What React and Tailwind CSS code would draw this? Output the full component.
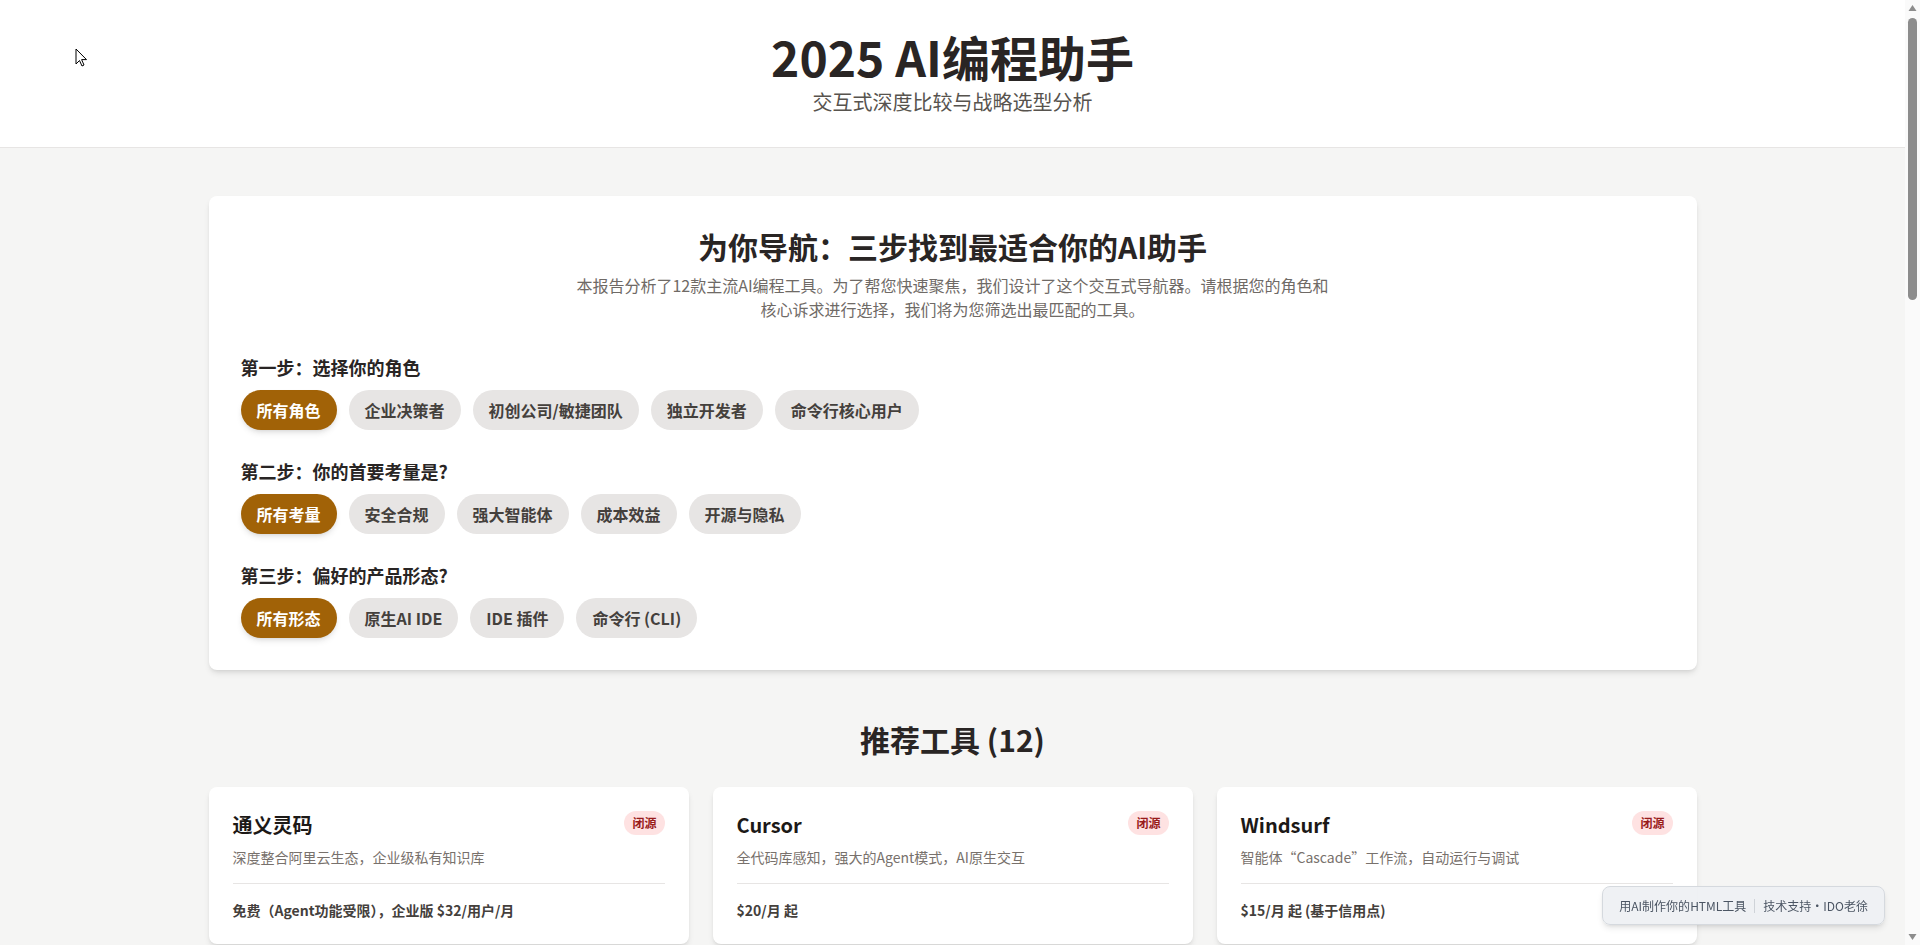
import React, { useState } from "react";

const steps = [
  { label: "第一步：选择你的角色", options: ["所有角色", "企业决策者", "初创公司/敏捷团队", "独立开发者", "命令行核心用户"] },
  { label: "第二步：你的首要考量是?", options: ["所有考量", "安全合规", "强大智能体", "成本效益", "开源与隐私"] },
  { label: "第三步：偏好的产品形态?", options: ["所有形态", "原生AI IDE", "IDE 插件", "命令行 (CLI)"] },
];

const tools = [
  { name: "通义灵码", desc: "深度整合阿里云生态，企业级私有知识库", price: "免费（Agent功能受限），企业版 $32/用户/月", open: false, form: "IDE 插件", agent: "中", security: "高" },
  { name: "Cursor", desc: "全代码库感知，强大的Agent模式，AI原生交互", price: "$20/月 起", open: false, form: "原生AI IDE", agent: "高", security: "中" },
  { name: "Windsurf", desc: "智能体“Cascade”工作流，自动运行与调试", price: "$15/月 起 (基于信用点)", open: false, form: "原生AI IDE", agent: "高", security: "中" },
  { name: "GitHub Copilot", desc: "生态最成熟，深度集成GitHub工作流", price: "$10/月 起，企业版 $39/用户/月", open: false, form: "IDE 插件", agent: "中", security: "高" },
  { name: "Claude Code", desc: "终端原生智能体，超强代码推理与重构能力", price: "包含于 Claude Pro $20/月", open: false, form: "命令行 (CLI)", agent: "高", security: "中" },
  { name: "Gemini CLI", desc: "谷歌开源命令行智能体，超大上下文窗口", price: "免费（个人账户额度）", open: true, form: "命令行 (CLI)", agent: "高", security: "中" },
  { name: "Cline", desc: "VS Code 开源智能体插件，自带模型密钥", price: "免费（按API用量付费）", open: true, form: "IDE 插件", agent: "高", security: "高" },
  { name: "Trae", desc: "字节跳动出品的AI原生IDE，国内免费可用", price: "免费", open: false, form: "原生AI IDE", agent: "中", security: "中" },
  { name: "Amazon Q Developer", desc: "深度集成AWS服务，企业级安全合规", price: "免费版 / Pro $19/用户/月", open: false, form: "IDE 插件", agent: "中", security: "高" },
  { name: "腾讯云 CodeBuddy", desc: "腾讯云生态整合，支持私有化部署", price: "个人免费，企业版按需定价", open: false, form: "IDE 插件", agent: "中", security: "高" },
  { name: "Aider", desc: "终端结对编程，Git原生工作流", price: "免费（按API用量付费）", open: true, form: "命令行 (CLI)", agent: "中", security: "高" },
  { name: "Continue", desc: "开源可定制的IDE助手，支持本地模型", price: "免费，团队版 $10/用户/月", open: true, form: "IDE 插件", agent: "中", security: "高" },
];

const advice = [
  { title: "企业决策者", text: "优先考虑安全合规与私有化部署能力，通义灵码、GitHub Copilot 企业版与 Amazon Q Developer 是稳妥之选。" },
  { title: "初创公司/敏捷团队", text: "追求开发速度与智能体能力，Cursor 与 Windsurf 的原生AI IDE 体验能最大化团队产出。" },
  { title: "独立开发者与命令行用户", text: "Claude Code、Gemini CLI 与 Aider 提供强大的终端智能体，开源方案兼顾成本与隐私。" },
];

function Badge({ open }) {
  return open ? (
    <span className="shrink-0 rounded-full bg-[#dcfce7] px-2 py-1 text-xs font-semibold leading-4 text-[#166534]">开源</span>
  ) : (
    <span className="shrink-0 rounded-full bg-[#fee2e2] px-2 py-1 text-xs font-semibold leading-4 text-[#991b1b]">闭源</span>
  );
}

function Scrollbar() {
  return (
    <div className="fixed top-0 right-0 z-50 flex h-screen w-[15px] flex-col items-center bg-[#fafafa]">
      <svg width="15" height="17" viewBox="0 0 15 17">
        <path d="M7.5 5 L11.5 11 H3.5 Z" fill="#8c8c8c" />
      </svg>
      <div className="mt-px h-[282px] w-[9px] rounded-full bg-[#8c8c8c]"></div>
      <div className="flex-1"></div>
      <svg width="15" height="17" viewBox="0 0 15 17">
        <path d="M3.5 6 H11.5 L7.5 12 Z" fill="#8c8c8c" />
      </svg>
    </div>
  );
}

function Cursor() {
  return (
    <svg className="pointer-events-none fixed top-[48px] left-[75px] z-50" width="13" height="20" viewBox="0 0 13 20">
      <path d="M1 1 V16 L4.5 12.5 L7 18 L9 17 L6.6 11.6 H11.5 Z" fill="#ffffff" stroke="#000000" strokeWidth="1" strokeLinejoin="miter" />
    </svg>
  );
}

export default function App() {
  const [sel, setSel] = useState([0, 0, 0]);

  return (
    <div className="min-h-screen bg-[#f5f5f4] pr-[15px] font-['Noto_Sans_CJK_SC','Noto_Sans',sans-serif] text-[#292524]">
      <header className="border-b border-[#e7e5e4] bg-white pt-8 pb-[31px] text-center">
        <h1 className="text-5xl font-bold leading-[48px] text-[#292524]">2025 AI编程助手</h1>
        <p className="mt-2 text-xl leading-7 text-[#57534e]">交互式深度比较与战略选型分析</p>
      </header>

      <main className="container mx-auto px-6 pt-12 pb-16">
        <section className="rounded-lg bg-white p-8 shadow-md">
          <h2 className="text-center text-3xl font-bold leading-9 text-[#292524]">为你导航：三步找到最适合你的AI助手</h2>
          <p className="mx-auto mt-[9px] max-w-[760px] text-center text-base leading-6 text-[#6f6a66]">
            本报告分析了12款主流AI编程工具。为了帮您快速聚焦，我们设计了这个交互式导航器。请根据您的角色和核心诉求进行选择，我们将为您筛选出最匹配的工具。
          </p>
          <div className="mt-8 flex flex-col gap-[27px]">
            {steps.map((step, si) => (
              <div key={step.label}>
                <h3 className="mb-[9px] text-lg font-semibold leading-7 text-[#292524]">{step.label}</h3>
                <div className="flex flex-wrap gap-3">
                  {step.options.map((opt, oi) => {
                    const active = sel[si] === oi;
                    return (
                      <button
                        key={opt}
                        onClick={() => setSel(sel.map((v, i) => (i === si ? oi : v)))}
                        className={
                          active
                            ? "rounded-full bg-[#a16207] px-4 py-2 text-base font-semibold leading-6 text-white shadow-md"
                            : "rounded-full bg-[#e7e5e4] px-4 py-2 text-base font-semibold leading-6 text-[#44403c]"
                        }
                      >
                        {opt}
                      </button>
                    );
                  })}
                </div>
              </div>
            ))}
          </div>
        </section>

        <section className="mt-[51px]">
          <h2 className="mb-[30px] text-center text-3xl font-bold leading-9 text-[#292524]">推荐工具 (12)</h2>
          <div className="grid grid-cols-3 gap-6">
            {tools.map((t) => (
              <div key={t.name} className="rounded-lg bg-white p-6 shadow-md">
                <div className="flex items-start justify-between gap-3">
                  <h3 className="text-xl font-bold leading-7 text-[#1c1917]">{t.name}</h3>
                  <Badge open={t.open} />
                </div>
                <p className="mt-2 text-sm leading-5 text-[#78716c]">{t.desc}</p>
                <div className="mt-4 border-t border-[#e7e5e4] pt-4">
                  <p className="text-sm font-semibold leading-5 text-[#44403c]">{t.price}</p>
                </div>
              </div>
            ))}
          </div>
        </section>

        <section className="mt-16">
          <h2 className="mb-8 text-center text-3xl font-bold leading-9 text-[#292524]">核心能力横向对比</h2>
          <div className="rounded-lg bg-white p-6 shadow-md">
            <div className="grid h-[52px] grid-cols-5 items-center border-b border-[#e7e5e4] text-sm font-bold text-[#44403c]">
              <span>工具</span>
              <span>产品形态</span>
              <span>智能体能力</span>
              <span>安全合规</span>
              <span>授权</span>
            </div>
            {tools.map((t) => (
              <div key={t.name} className="grid h-[60px] grid-cols-5 items-center border-b border-[#f0efee] text-sm text-[#57534e]">
                <span className="font-semibold text-[#292524]">{t.name}</span>
                <span>{t.form}</span>
                <span>{t.agent}</span>
                <span>{t.security}</span>
                <span>{t.open ? "开源" : "闭源"}</span>
              </div>
            ))}
          </div>
        </section>

        <section className="mt-16">
          <h2 className="mb-8 text-center text-3xl font-bold leading-9 text-[#292524]">战略选型建议</h2>
          <div className="grid grid-cols-3 gap-6">
            {advice.map((a) => (
              <div key={a.title} className="h-[200px] rounded-lg bg-white p-6 shadow-md">
                <h3 className="text-xl font-bold leading-7 text-[#1c1917]">{a.title}</h3>
                <p className="mt-3 text-base leading-7 text-[#57534e]">{a.text}</p>
              </div>
            ))}
          </div>
        </section>
      </main>

      <footer className="border-t border-[#e7e5e4] bg-white py-12 text-center text-sm leading-6 text-[#78716c]">
        <p>© 2025 AI编程助手深度比较报告</p>
        <p className="mt-2">数据来源于各产品官方网站及公开资料，价格信息仅供参考。</p>
      </footer>

      <div className="fixed right-[35px] bottom-5 flex h-[39px] items-center rounded-lg border border-[#d5d9de] bg-[#eef0f3]/95 px-4 text-xs leading-4 text-[#4b5563] shadow-md">
        <span>用AI制作你的HTML工具</span>
        <span className="mx-2 h-3.5 w-px bg-[#cfd3d8]"></span>
        <span>技术支持・IDO老徐</span>
      </div>

      <Cursor />
      <Scrollbar />
    </div>
  );
}
